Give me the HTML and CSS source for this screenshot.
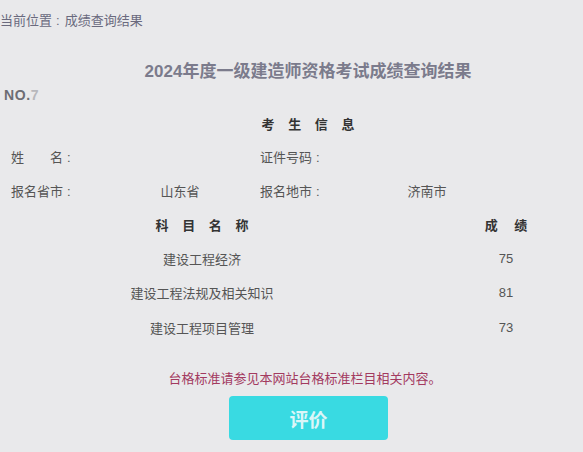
FILE: index.html
```html
<!DOCTYPE html>
<html lang="zh-CN">
<head>
<meta charset="utf-8">
<title>成绩查询结果</title>
<link rel="stylesheet" href="styles.css">
</head>
<body>
<div class="page">
  <div class="crumb">当前位置<span class="colon">:</span>成绩查询结果</div>
  <h1 class="title">2024年度一级建造师资格考试成绩查询结果</h1>
  <div class="no">NO.<span class="fade">7</span></div>
  <div class="section-head">考 生 信 息</div>
  <div class="info">
    <div class="lbl">姓　　名<span class="colon">:</span></div>
    <div class="val"></div>
    <div class="lbl lbl2">证件号码<span class="colon">:</span></div>
    <div class="val"></div>
    <div class="lbl">报名省市<span class="colon">:</span></div>
    <div class="val">山东省</div>
    <div class="lbl lbl2">报名地市<span class="colon">:</span></div>
    <div class="val">济南市</div>
  </div>
  <div class="scores">
    <div class="sh">科 目 名 称</div>
    <div class="sh sh2">成 绩</div>
    <div class="sc">建设工程经济</div>
    <div class="sc">75</div>
    <div class="sc">建设工程法规及相关知识</div>
    <div class="sc">81</div>
    <div class="sc">建设工程项目管理</div>
    <div class="sc">73</div>
  </div>
  <div class="note">台格标准请参见本网站台格标准栏目相关内容。</div>
  <div class="btn-row"><button class="btn">评价</button></div>
</div>
</body>
</html>
```
FILE: styles.css
```css
html, body {
  margin: 0;
  padding: 0;
  background: #e9e9eb;
  overflow: hidden;
}
body {
  font-family: "Liberation Sans", "Noto Sans CJK SC", sans-serif;
  font-size: 13px;
  color: #555;
}
.page {
  width: 616px;
}
.colon {
  display: inline-block;
  padding: 0 5px 0 4px;
}
.crumb {
  padding-top: 11px;
  line-height: 20px;
  color: #6a6a7e;
  font-size: 13px;
}
.title {
  margin: 30px 0 0 0;
  text-align: center;
  font-size: 17px;
  line-height: 22px;
  font-weight: bold;
  color: #7b7b8c;
}
.no {
  margin-top: 2px;
  padding-left: 4px;
  font-weight: bold;
  font-size: 14px;
  letter-spacing: 0.6px;
  line-height: 20px;
  color: #6d6d74;
}
.no .fade {
  color: #b8b8bc;
}
.section-head {
  margin-top: 10px;
  text-align: center;
  font-weight: bold;
  color: #333;
  line-height: 20px;
  word-spacing: 10px;
}
.info {
  display: grid;
  grid-template-columns: 109px 120px 128px 118px;
  grid-auto-rows: 34px;
  margin-left: 11px;
  margin-top: 4px;
  align-items: center;
}
.lbl {
  color: #555;
}
.lbl2 {
  padding-left: 20px;
}
.val {
  text-align: center;
  color: #555;
}
.scores {
  display: grid;
  grid-template-columns: 404px 204px;
  grid-auto-rows: 34.3px;
  align-items: center;
  text-align: center;
}
.sh {
  font-weight: bold;
  color: #333;
  word-spacing: 10px;
}
.sh2 {
  word-spacing: 13px;
}
.sc {
  color: #555;
}
.note {
  margin-top: 25px;
  text-align: center;
  color: #a33a5f;
  line-height: 20px;
  padding-right: 6px;
}
.btn-row {
  display: flex;
  justify-content: center;
  margin-top: 7px;
}
.btn {
  width: 159px;
  height: 44px;
  border: none;
  border-radius: 4px;
  background: #39dae2;
  color: #dcf6f8;
  font-family: "Liberation Sans", "Noto Sans CJK SC", sans-serif;
  font-weight: bold;
  font-size: 19px;
  margin-left: 1px;
}
```
